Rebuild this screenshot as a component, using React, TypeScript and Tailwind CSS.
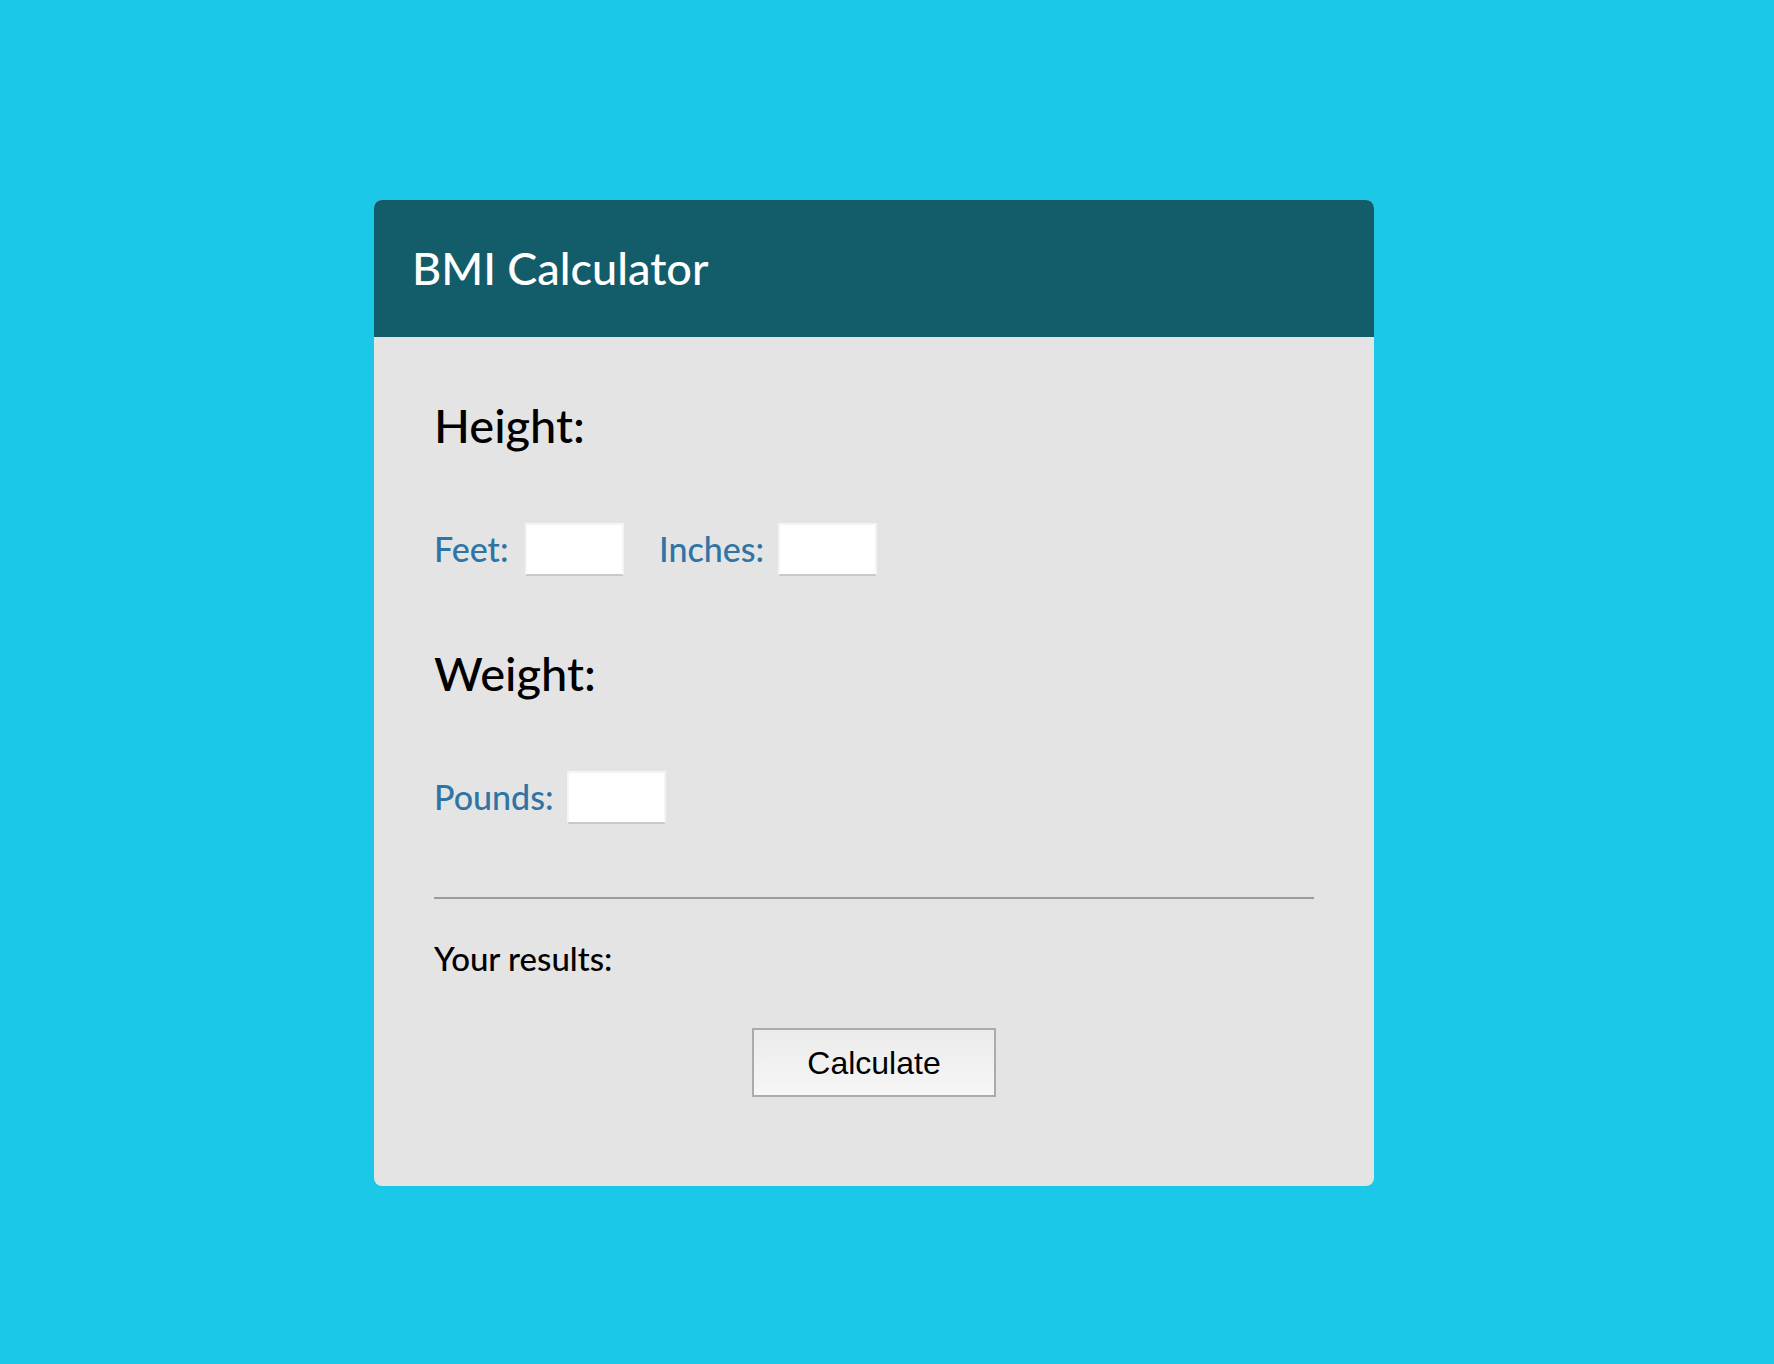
import React from "react";

const labelFont = { fontFamily: "Lato, 'Open Sans', sans-serif" };

function Field({ label, labelWidth }: { label: string; labelWidth: string }) {
    return <>
        <label className={`${labelWidth} text-[34px] leading-[1.2] font-medium text-[#2e74a4]`}>{label}</label>
        <input
            type="text"
            className="w-[99px] h-[53px] bg-white border-2 border-t-[#f4f4f4] border-l-[#f4f4f4] border-r-[#f4f4f4] border-b-[#c9c9c9] outline-none"
        />
    </>
}

export default function App() {
    return <div className="min-h-screen w-full bg-[#1bc8e7] pt-[200px] pl-[374px] pb-[180px]" style={labelFont}>
        <div className="w-[1000px] rounded-[8px] overflow-hidden bg-[#e4e4e4]">
            <div className="h-[137px] bg-[#135c69] pt-[41px] pl-[38px]">
                <h1 className="text-[45px] leading-[1.2] font-medium text-white">BMI Calculator</h1>
            </div>
            <div className="px-[60px] pb-[89px]">
                <h2 className="mt-[60px] text-[47px] leading-[1.2] font-medium text-black">Height:</h2>
                <div className="mt-[70px] flex items-center">
                    <Field label="Feet:" labelWidth="w-[91px]" />
                    <div className="w-[35px]" />
                    <Field label="Inches:" labelWidth="w-[119px]" />
                </div>

                <h2 className="mt-[69px] text-[47px] leading-[1.2] font-medium text-black">Weight:</h2>
                <div className="mt-[69px] flex items-center">
                    <Field label="Pounds:" labelWidth="w-[133px]" />
                </div>

                <hr className="mt-[73px] border-0 h-[2px] bg-[#9b9b9b]" />

                <p className="mt-[40px] text-[33px] leading-[1.2] font-medium text-black">Your results:</p>

                <div className="mt-[50px] flex justify-center">
                    <button className="w-[244px] h-[69px] border-2 border-[#ababab] bg-gradient-to-b from-[#ebebeb] to-[#f6f6f6] text-[32px] text-black" style={{ fontFamily: "'Liberation Sans', Arial, sans-serif" }}>
                        Calculate
                    </button>
                </div>
            </div>
        </div>
    </div>
}
